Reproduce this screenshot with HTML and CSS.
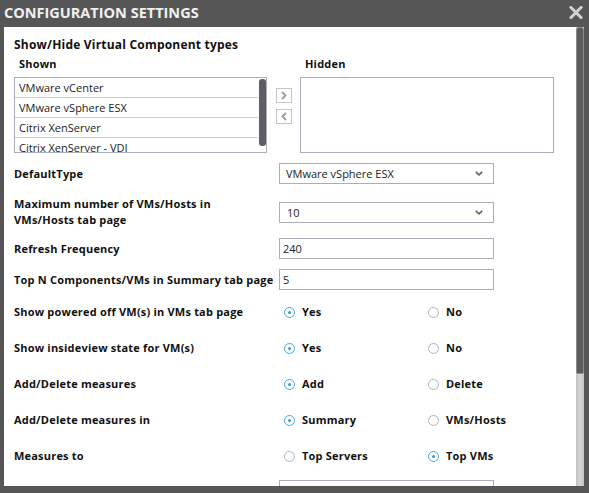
FILE: index.html
```html
<!DOCTYPE html>
<html>
<head>
<meta charset="utf-8">
<link rel="stylesheet" href="styles.css">
</head>
<body>
<div class="dialog">
  <div class="titlebar">
    <span class="title">CONFIGURATION SETTINGS</span>
    <svg class="close" width="14" height="13" viewBox="0 0 14 13"><path d="M2 1.5 L12 11.5 M12 1.5 L2 11.5" stroke="#d2d2d2" stroke-width="3" stroke-linecap="square" fill="none"/></svg>
  </div>
  <div class="body">
    <div class="content">
      <div class="section-title">Show/Hide Virtual Component types</div>
      <div class="lists">
        <div class="list-col">
          <div class="list-label">Shown</div>
          <div class="listbox">
            <ul class="items">
              <li>VMware vCenter</li>
              <li>VMware vSphere ESX</li>
              <li>Citrix XenServer</li>
              <li>Citrix XenServer - VDI</li>
            </ul>
            <div class="list-scroll"><div class="list-thumb"></div></div>
          </div>
        </div>
        <div class="move-btns">
          <div class="move-btn"><svg width="6" height="9" viewBox="0 0 6 9"><path d="M1 1 L4.5 4.5 L1 8" stroke="#a0a0a0" stroke-width="2" fill="none"/></svg></div>
          <div class="move-btn"><svg width="6" height="9" viewBox="0 0 6 9"><path d="M5 1 L1.5 4.5 L5 8" stroke="#a0a0a0" stroke-width="2" fill="none"/></svg></div>
        </div>
        <div class="list-col">
          <div class="list-label">Hidden</div>
          <div class="listbox"></div>
        </div>
      </div>

      <div class="form-row row-default">
        <div class="label">DefaultType</div>
        <div class="select"><span>VMware vSphere ESX</span><svg width="8" height="5" viewBox="0 0 8 5"><path d="M0.8 0.8 L4 3.8 L7.2 0.8" stroke="#666" stroke-width="1.8" fill="none"/></svg></div>
      </div>
      <div class="form-row row-max">
        <div class="label">Maximum number of VMs/Hosts in<br>VMs/Hosts tab page</div>
        <div class="select sel-num"><span>10</span><svg width="8" height="5" viewBox="0 0 8 5"><path d="M0.8 0.8 L4 3.8 L7.2 0.8" stroke="#666" stroke-width="1.8" fill="none"/></svg></div>
      </div>
      <div class="form-row row-input">
        <div class="label">Refresh Frequency</div>
        <div class="input">240</div>
      </div>
      <div class="form-row row-input">
        <div class="label">Top N Components/VMs in Summary tab page</div>
        <div class="input">5</div>
      </div>

      <div class="form-row radio-row first">
        <div class="label">Show powered off VM(s) in VMs tab page</div>
        <div class="radios">
          <div class="opt"><span class="radio on"></span>Yes</div>
          <div class="opt"><span class="radio"></span>No</div>
        </div>
      </div>
      <div class="form-row radio-row">
        <div class="label">Show insideview state for VM(s)</div>
        <div class="radios">
          <div class="opt"><span class="radio on"></span>Yes</div>
          <div class="opt"><span class="radio"></span>No</div>
        </div>
      </div>
      <div class="form-row radio-row">
        <div class="label">Add/Delete measures</div>
        <div class="radios">
          <div class="opt"><span class="radio on"></span>Add</div>
          <div class="opt"><span class="radio"></span>Delete</div>
        </div>
      </div>
      <div class="form-row radio-row">
        <div class="label">Add/Delete measures in</div>
        <div class="radios">
          <div class="opt"><span class="radio on"></span>Summary</div>
          <div class="opt"><span class="radio"></span>VMs/Hosts</div>
        </div>
      </div>
      <div class="form-row radio-row">
        <div class="label">Measures to</div>
        <div class="radios">
          <div class="opt"><span class="radio"></span>Top Servers</div>
          <div class="opt"><span class="radio on"></span>Top VMs</div>
        </div>
      </div>
      <div class="form-row row-last">
        <div class="label"></div>
        <div class="input"></div>
      </div>
    </div>
    <div class="scrollbar"><div class="thumb"></div></div>
  </div>
</div>
</body>
</html>
```

FILE: styles.css
```css
html, body {
  margin: 0;
  padding: 0;
  background: #565656;
}
body {
  font-family: "Open Sans", "DejaVu Sans", sans-serif;
  font-size: 11px;
  color: #111;
}
.dialog {
  width: 589px;
  height: 493px;
  display: flex;
  flex-direction: column;
  background: #565656;
  overflow: hidden;
}
.titlebar {
  height: 27px;
  display: flex;
  align-items: center;
  justify-content: space-between;
  padding: 0 6px 0 4px;
  box-sizing: border-box;
}
.title {
  color: #f0f0f0;
  font-weight: 700;
  font-size: 14.5px;
  line-height: 27px;
  margin-top: -3px;
}
.close {
  display: block;
  margin-top: -2px;
}
.body {
  display: flex;
  height: 459px;
  margin: 0 5px 0 4px;
}
.content {
  flex: 1;
  background: #fff;
  padding: 11px 0 0 10px;
  overflow: hidden;
  box-sizing: border-box;
}
.scrollbar {
  width: 8px;
  background: linear-gradient(to right, #c2c2c2, #d6d6d6 50%, #c4c4c4);
}
.scrollbar .thumb {
  height: 347px;
  background: #5c5c5c;
  border: 1px solid #8a8a8a;
  border-radius: 3px 3px 2px 2px;
  box-sizing: border-box;
}
.section-title {
  font-weight: 700;
  font-size: 12px;
  letter-spacing: 0.2px;
  line-height: 14px;
}
.lists {
  display: grid;
  grid-template-columns: 253px 33px 254px;
  margin-top: 5px;
}
.list-col {
  display: flex;
  flex-direction: column;
}
.list-label {
  font-weight: 700;
  line-height: 14px;
  padding-left: 5px;
  margin-bottom: 6px;
  letter-spacing: 0.2px;
}
.listbox {
  height: 76px;
  border: 1px solid #a9aeba;
  box-sizing: border-box;
  display: flex;
  overflow: hidden;
}
.items {
  list-style: none;
  margin: 0;
  padding: 0;
  flex: 1;
}
.items li {
  height: 20px;
  line-height: 19px;
  box-sizing: border-box;
  border-bottom: 1px solid #cfcfcf;
  padding-left: 4px;
  white-space: nowrap;
  color: #222;
}
.list-scroll {
  width: 8px;
}
.list-thumb {
  width: 7px;
  height: 67px;
  margin: 1px 0 0 1px;
  background: #5e5e5e;
  border-radius: 3px;
}
.move-btns {
  display: flex;
  flex-direction: column;
  gap: 6px;
  padding: 31px 0 0 9px;
}
.move-btn {
  width: 16px;
  height: 15px;
  border: 1px solid #c6c6c6;
  box-sizing: border-box;
  display: flex;
  align-items: center;
  justify-content: center;
}
.move-btn svg {
  display: block;
}
.form-row {
  display: grid;
  grid-template-columns: 265px 215px;
  align-items: center;
}
.label {
  font-weight: 700;
  line-height: 16px;
  white-space: nowrap;
  letter-spacing: 0.2px;
}
.row-default {
  margin-top: 10px;
}
.row-max {
  margin-top: 12px;
}
.row-input {
  margin-top: 10px;
}
.select {
  height: 21px;
  border: 1px solid #a9aeba;
  box-sizing: border-box;
  display: flex;
  align-items: center;
  justify-content: space-between;
  padding: 0 10px 0 6px;
  color: #222;
}
.select svg {
  display: block;
}
.sel-num {
  padding-left: 7px;
}
.input {
  height: 21px;
  line-height: 19px;
  border: 1px solid #a9aeba;
  box-sizing: border-box;
  padding-left: 3px;
  color: #222;
}
.radio-row {
  margin-top: 16px;
  height: 20px;
}
.radio-row.first {
  margin-top: 12px;
}
.radios {
  display: flex;
  padding-left: 5px;
  font-weight: 700;
  letter-spacing: 0.2px;
}
.opt {
  flex: none;
  width: 144px;
  display: flex;
  align-items: center;
  gap: 7px;
  line-height: 16px;
  white-space: nowrap;
}
.radio {
  flex: none;
  width: 11px;
  height: 11px;
  border: 1px solid #b4b4b4;
  border-radius: 50%;
  box-sizing: border-box;
  display: flex;
  align-items: center;
  justify-content: center;
}
.radio.on {
  border-color: #4aa6dc;
}
.radio.on::after {
  content: "";
  width: 3px;
  height: 3px;
  border-radius: 50%;
  background: #3b9bd6;
}
.row-last {
  margin-top: 14px;
}
```
